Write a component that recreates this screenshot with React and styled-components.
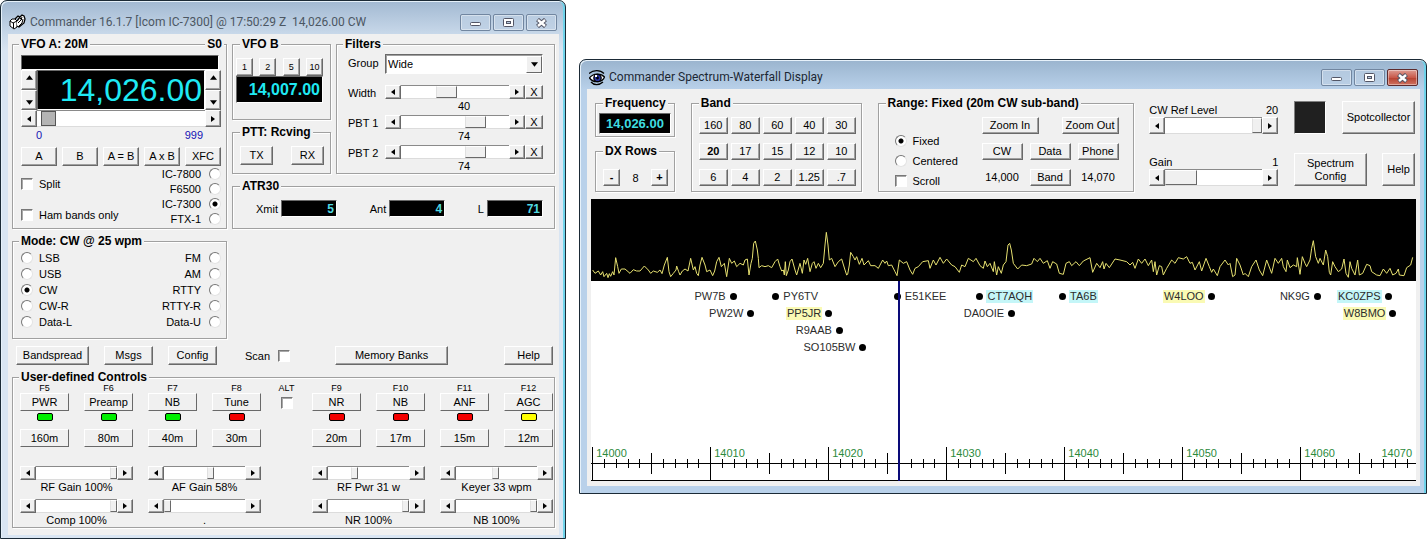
import React from 'react';
import styled, { createGlobalStyle } from 'styled-components';

const GlobalStyle = createGlobalStyle`
  * {
    box-sizing: border-box;
  }

  body {
    margin: 0;
    background: #fff;
    color: #000;
    font-family: "Liberation Sans", Arial, sans-serif;
    font-size: 11px;
    line-height: 14px;
  }

  button, input, select {
    font-family: inherit;
    font-size: inherit;
    color: inherit;
  }
`;

const Desktop = styled.main`
  display: grid;
  grid-template-columns: minmax(566px, 2fr) 3fr;
  column-gap: 13px;
  align-items: start;
`;

/* ---------- window frame ---------- */

const WindowFrame = styled.section`
  min-width: 0;
  margin-top: ${(props) => props.$top || 0}px;
  padding: 0 6px ${(props) => (props.$active ? 7 : 3)}px 7px;
  border: 1px solid #1b2a36;
  border-radius: 7px 7px 0 0;
  background: ${(props) =>
    props.$active
      ? 'linear-gradient(#9ab4ce, #b9d1ea 30px)'
      : 'linear-gradient(#a2b9d2, #c9d9ea 34px, #d9e5f2 50px)'};
  box-shadow: inset 1px 1px #e6f1fa, inset -2px 0 #6fd3ea;
`;

const TitleBar = styled.header`
  display: flex;
  align-items: center;
  gap: 4px;
  height: ${(props) => (props.$active ? 29 : 33)}px;
  padding: ${(props) => (props.$active ? '6px 2px 0 2px' : '10px 2px 0 1px')};
`;

const Title = styled.h1`
  flex: 1;
  margin: 0;
  overflow: hidden;
  color: ${(props) => (props.$active ? '#1c2733' : '#4c5763')};
  font-family: Roboto, "Open Sans", sans-serif;
  font-size: 12px;
  font-weight: 400;
  line-height: 17px;
  white-space: pre;
`;

const CaptionButtons = styled.div`
  display: flex;
  gap: 2px;
`;

const CaptionButton = styled.button`
  display: grid;
  place-items: center;
  width: 31px;
  height: 17px;
  padding: 0;
  border: 1px solid ${(props) => (props.$danger ? '#5d2a2c' : '#7186a0')};
  border-radius: 2px;
  background: ${(props) =>
    props.$danger ? 'linear-gradient(#dd9c92, #c8594a 50%, #b5402f 51%, #cf7260)' : 'rgba(190, 208, 228, 0.6)'};
  box-shadow: inset 0 0 0 1px rgba(255, 255, 255, 0.4);
`;

const Client = styled.div`
  padding: ${(props) => props.$pad};
  background: #f0f0f0;
`;

/* ---------- common controls ---------- */

const Group = styled.fieldset`
  position: relative;
  min-width: 0;
  margin: 0;
  padding: ${(props) => props.$pad || '0'};
  border: 1px solid #a0a0a0;
  box-shadow: 1px 1px #fff, inset 1px 1px #fff;
`;

const Legend = styled.legend`
  margin-left: ${(props) => props.$indent || 0}px;
  padding: 0 2px;
  background: #f0f0f0;
  font-size: 12px;
  font-weight: 700;
  line-height: 14px;
  white-space: nowrap;
`;

const Signal = styled.output`
  position: absolute;
  top: -14px;
  right: 2px;
  padding: 0 2px;
  background: #f0f0f0;
  font-size: 12px;
  font-weight: 700;
`;

const Button = styled.button`
  width: ${(props) => (props.$w ? `${props.$w}px` : 'auto')};
  height: ${(props) => props.$h || 19}px;
  padding: 0;
  border: 1px solid;
  border-color: #fff #696969 #696969 #fff;
  background: #f0f0f0;
  box-shadow: ${(props) => (props.$flat ? 'none' : 'inset -1px -1px #a0a0a0')};
  font-size: ${(props) => (props.$small ? 9 : 11)}px;
  font-weight: ${(props) => (props.$bold ? 700 : 400)};
  line-height: 13px;
  white-space: ${(props) => (props.$wrap ? 'normal' : 'nowrap')};
`;

const Readout = styled.output`
  display: flex;
  align-items: center;
  justify-content: ${(props) => (props.$center ? 'center' : 'flex-end')};
  height: ${(props) => props.$h}px;
  padding: 0 2px;
  border: 1px solid;
  border-color: #696969 #fff #fff #696969;
  background: #000;
  color: ${(props) => props.$color || '#1fe9f3'};
  font-size: ${(props) => props.$size}px;
  font-weight: ${(props) => (props.$light ? 400 : 700)};
`;

const Choice = styled.label`
  display: flex;
  flex-direction: ${(props) => (props.$reverse ? 'row-reverse' : 'row')};
  align-items: center;
  gap: ${(props) => props.$gap || 6}px;
  height: ${(props) => props.$h || 16}px;
  white-space: nowrap;
`;

const Radio = styled.input.attrs({ type: 'radio' })`
  appearance: none;
  width: 12px;
  height: 12px;
  margin: 0;
  border: 1px solid;
  border-color: #777 #e3e3e3 #e3e3e3 #777;
  border-radius: 50%;
  background: #fff;

  &:checked {
    background: radial-gradient(circle, #000 2px, #fff 3px);
  }
`;

const Check = styled.input.attrs({ type: 'checkbox' })`
  appearance: none;
  width: 12px;
  height: 12px;
  margin: 0;
  border: 1px solid;
  border-color: #777 #fff #fff #777;
  background: #fff;
  box-shadow: inset 1px 1px #a8a8a8;
`;

const ScrollBox = styled.div`
  display: flex;
  height: ${(props) => props.$h}px;
`;

const ScrollButton = styled(Button)`
  display: grid;
  place-items: center;
  flex: none;
  width: 16px;
  height: 100%;
`;

const ScrollTrack = styled.input.attrs({ type: 'range' })`
  appearance: none;
  flex: 1;
  width: 0;
  min-width: 0;
  height: 100%;
  margin: 0;
  border-top: 1px solid #8a8a8a;
  border-bottom: 1px solid #dcdcdc;
  background: #fff;

  &::-webkit-slider-thumb {
    appearance: none;
    width: ${(props) => props.$thumb}px;
    height: ${(props) => props.$h - 2}px;
    border: 1px solid;
    border-color: ${(props) => (props.$dark ? '#555' : '#fff #696969 #696969 #e0e0e0')};
    background: ${(props) => (props.$dark ? '#b4b4b4' : '#f0f0f0')};
  }
`;

const SHAPES = {
  left: '5,0 5,6 1,3',
  right: '1,0 1,6 5,3',
  up: '0,5 6,5 3,1',
  down: '0,1 6,1 3,5',
};

const Arrow = ({ dir, size = 6 }) => (
    <svg width={size} height={size} viewBox="0 0 6 6">
        <polygon points={SHAPES[dir]} fill="#000" />
    </svg>
);

const ScrollBar = ({ label, value, max = 100, thumb = 7, h = 14, dark, children }) => (
    <ScrollBox $h={h}>
        <ScrollButton type="button" aria-label={`${label} down`}><Arrow dir="left" /></ScrollButton>
        <ScrollTrack aria-label={label} min="0" max={max} defaultValue={value} $thumb={thumb} $h={h} $dark={dark} />
        <ScrollButton type="button" aria-label={`${label} up`}><Arrow dir="right" /></ScrollButton>
        {children}
    </ScrollBox>
);

const Captions = ({ active }) => (
    <CaptionButtons>
        <CaptionButton type="button" aria-label="Minimize">
            <svg width="13" height="9" viewBox="0 0 13 9">
                <rect x="1.5" y="4.5" width="10" height="3" rx="1" fill="#fff" stroke="#535666" />
            </svg>
        </CaptionButton>
        <CaptionButton type="button" aria-label="Maximize">
            <svg width="12" height="9" viewBox="0 0 12 9">
                <rect x="0.5" y="0.5" width="10" height="8" rx="1" fill="#fff" stroke="#535666" />
                <rect x="3.5" y="3.5" width="4" height="2" fill="#b9cbe0" stroke="#535666" />
            </svg>
        </CaptionButton>
        <CaptionButton type="button" aria-label="Close" $danger={active}>
            <svg width="13" height="10" viewBox="0 0 13 10">
                <path d="M2.5 1.5 L10.5 8.5 M10.5 1.5 L2.5 8.5" stroke="#535666" strokeWidth="4.4" />
                <path d="M3 2 L10 8 M10 2 L3 8" stroke="#fff" strokeWidth="2.4" />
            </svg>
        </CaptionButton>
    </CaptionButtons>
);

const RadioLogo = () => (
    <svg width="17" height="17" viewBox="0 0 17 17" fill="none">
        <path d="M1 7 L3 5 L6 5 L8 7 V13 L5 15 L1 12 Z" fill="#fff" stroke="#000" />
        <path d="M1 7 L4 9 L8 7 M4.5 9 V14" stroke="#000" />
        <path d="M6 5 L9 2 L11 3 M8 7 L11 3 L13 1 L15 2 L16 5 L15 9 L10 13 L8 12" fill="#fff" stroke="#000" strokeWidth="1.3" />
        <path d="M9 9 L12 6 L13 3 M10 12 L13 9 L14 5 M11 4 L13 6" stroke="#000" />
    </svg>
);

const EyeLogo = () => (
    <svg width="16" height="16" viewBox="0 0 16 16" fill="none">
        <path d="M0 3.5 C4 0 11 -0.5 15 3.5" stroke="#000" strokeWidth="1.2" />
        <path d="M0.5 8 C4 3 12 3 15.5 7 C14 12 5 14 0.5 8 Z" fill="#fff" stroke="#000" strokeWidth="1.3" />
        <circle cx="8.5" cy="8" r="3.7" fill="#2a35a0" stroke="#000" strokeWidth="1.2" />
        <circle cx="8.5" cy="8" r="1.4" fill="#000" />
        <rect x="6" y="5" width="2" height="2" fill="#fff" />
        <path d="M2 12 C5 15.5 10 15.5 14 12" stroke="#000" strokeWidth="1.3" />
    </svg>
);

/* ---------- transceiver window ---------- */

const Panels = styled.div`
  display: grid;
  grid-template-columns: 215px 1fr;
  gap: 5px;
  align-items: start;
`;

const RightPanels = styled.div`
  display: grid;
  grid-template-columns: 99px 1fr;
  gap: 5px;
`;

const Stack = styled.div`
  display: flex;
  flex-direction: column;
  gap: ${(props) => props.$gap || 0}px;
`;

const WideGroup = styled(Group)`
  grid-column: 1 / -1;
`;

const Meter = styled.div`
  height: 15px;
  margin-right: 2px;
  border: 1px solid;
  border-color: #696969 #fff #fff #696969;
  background: #000;
`;

const TuneRow = styled.div`
  display: grid;
  grid-template-columns: 16px 1fr 16px;
  height: 40px;
`;

const Spinner = styled.div`
  display: grid;
  grid-template-rows: 1fr 1fr;
`;

const SpinButton = styled(Button)`
  display: grid;
  justify-items: center;
  align-items: ${(props) => props.$align};
  width: 16px;
  height: 100%;
  padding: 3px 0;
`;

const Limits = styled.div`
  display: flex;
  justify-content: space-between;
  padding: 1px 18px 5px 15px;
  color: #1414b4;
`;

const ButtonRow = styled.div`
  display: flex;
  justify-content: space-between;
`;

const Rigs = styled.div`
  display: flex;
  justify-content: space-between;
  height: 60px;
`;

const RigChecks = styled(Stack)`
  justify-content: space-between;
  padding: 10px 0 3px;
`;

const ModeGrid = styled.div`
  display: flex;
  justify-content: space-between;
`;

const FilterGrid = styled.div`
  display: grid;
  grid-template-columns: 37px 1fr;
  row-gap: 2px;
`;

const FilterLabel = styled.label`
  line-height: ${(props) => props.$lh || 15}px;
`;

const SelectBox = styled.div`
  position: relative;
  height: 20px;
  margin-bottom: 9px;
  border: 1px solid;
  border-color: #696969 #fff #fff #696969;
  box-shadow: inset 1px 1px #a0a0a0;
  background: #fff;
`;

const Select = styled.select`
  appearance: none;
  width: 100%;
  height: 100%;
  padding: 0 2px;
  border: 0;
  background: transparent;
`;

const SelectArrow = styled.span`
  position: absolute;
  top: 1px;
  right: 0;
  display: grid;
  place-items: center;
  width: 16px;
  height: 17px;
  border: 1px solid;
  border-color: #fff #696969 #696969 #fff;
  background: #f0f0f0;
  pointer-events: none;
`;

const FilterControl = styled.div`
  height: 28px;
  text-align: center;
`;

const TunerRow = styled.div`
  display: flex;
  justify-content: space-between;
`;

const TunerField = styled.label`
  display: flex;
  align-items: center;
  gap: 3px;
`;

const TunerReadout = styled(Readout)`
  width: 56px;
`;

const Actions = styled.div`
  display: flex;
  gap: 15px;
  padding: 7px 2px 5px 4px;
`;

const ScanChoice = styled(Choice)`
  height: 19px;
  margin: 0 30px 0 13px;
`;

const HelpButton = styled(Button)`
  margin-left: auto;
`;

const UserGrid = styled.div`
  display: grid;
  grid-template-columns: repeat(4, 1fr) 21px repeat(4, 1fr);
  column-gap: 15px;
`;

const UserKey = styled.div`
  display: flex;
  flex-direction: column;
  align-items: stretch;
  font-size: 9px;
  line-height: 9px;
  text-align: center;
`;

const Led = styled.span`
  align-self: center;
  width: 16px;
  height: 8px;
  margin: 2px 0 8px;
  border: 1px solid #000;
  border-radius: 2px;
  background: ${(props) => props.$color};
`;

const AltChoice = styled.label`
  display: flex;
  flex-direction: column;
  align-items: center;
  gap: 4px;
  font-size: 9px;
  line-height: 9px;
`;

const UserSlider = styled.div`
  grid-column: ${(props) => props.$col} / span 2;
  margin-top: ${(props) => (props.$first ? 19 : 5)}px;
  text-align: center;
`;

const RIGS = ['IC-7800', 'F6500', 'IC-7300', 'FTX-1'];
const MODES_LEFT = ['LSB', 'USB', 'CW', 'CW-R', 'Data-L'];
const MODES_RIGHT = ['FM', 'AM', 'RTTY', 'RTTY-R', 'Data-U'];

const FILTERS = [
  { label: 'Width', value: 40 },
  { label: 'PBT 1', value: 74 },
  { label: 'PBT 2', value: 74 },
];

const GREEN = '#00f000';
const RED = '#f40000';

const KEYS = [
  { key: 'F5', name: 'PWR', led: GREEN, band: '160m' },
  { key: 'F6', name: 'Preamp', led: GREEN, band: '80m' },
  { key: 'F7', name: 'NB', led: GREEN, band: '40m' },
  { key: 'F8', name: 'Tune', led: RED, band: '30m' },
  { key: 'F9', name: 'NR', led: RED, band: '20m' },
  { key: 'F10', name: 'NB', led: RED, band: '17m' },
  { key: 'F11', name: 'ANF', led: RED, band: '15m' },
  { key: 'F12', name: 'AGC', led: '#ffff00', band: '12m' },
];

const SLIDERS = [
  { text: 'RF Gain 100%', value: 100, col: 1 },
  { text: 'AF Gain 58%', value: 58, col: 3 },
  { text: 'RF Pwr 31 w', value: 31, col: 6 },
  { text: 'Keyer 33 wpm', value: 49, col: 8 },
  { text: 'Comp 100%', value: 100, col: 1 },
  { text: '.', value: 0, col: 3 },
  { text: 'NR 100%', value: 100, col: 6 },
  { text: 'NB 100%', value: 100, col: 8 },
];

const SpinPair = () => (
    <Spinner>
        <SpinButton type="button" aria-label="Tune up" $align="start"><Arrow dir="up" size={7} /></SpinButton>
        <SpinButton type="button" aria-label="Tune down" $align="end"><Arrow dir="down" size={7} /></SpinButton>
    </Spinner>
);

const KeyColumn = ({ item }) => (
    <UserKey>
        {item.key}
        <Button type="button" $flat $h={18}>{item.name}</Button>
        <Led $color={item.led} />
        <Button type="button" $flat $h={18}>{item.band}</Button>
    </UserKey>
);

const VfoA = () => (
    <Group $pad="4px 5px 2px 8px">
        <Legend $indent={-2}>VFO A: 20M</Legend>
        <Signal>S0</Signal>
        <Meter />
        <TuneRow>
            <SpinPair />
            <Readout $h={40} $size={32} $light>14,026.00</Readout>
            <SpinPair />
        </TuneRow>
        <ScrollBar label="VFO A offset" value={26} max={999} thumb={15} h={17} dark />
        <Limits><span>0</span><span>999</span></Limits>
        <ButtonRow>
            {['A', 'B', 'A = B', 'A x B', 'XFC'].map((text) => (
                <Button type="button" $w={36} key={text}>{text}</Button>
            ))}
        </ButtonRow>
        <Rigs>
            <RigChecks>
                <Choice><Check />Split</Choice>
                <Choice><Check />Ham bands only</Choice>
            </RigChecks>
            <Stack>
                {RIGS.map((rig) => (
                    <Choice $reverse $h={15} $gap={8} key={rig}>
                        <Radio name="rig" defaultChecked={rig === 'IC-7300'} />{rig}
                    </Choice>
                ))}
            </Stack>
        </Rigs>
    </Group>
);

const Mode = () => (
    <Group $pad="2px 5px 8px 8px">
        <Legend $indent={-2}>Mode: CW @ 25 wpm</Legend>
        <ModeGrid>
            <Stack>
                {MODES_LEFT.map((mode) => (
                    <Choice key={mode}><Radio name="mode" defaultChecked={mode === 'CW'} />{mode}</Choice>
                ))}
            </Stack>
            <Stack>
                {MODES_RIGHT.map((mode) => (
                    <Choice $reverse $gap={8} key={mode}><Radio name="mode" />{mode}</Choice>
                ))}
            </Stack>
        </ModeGrid>
    </Group>
);

const Filters = () => (
    <Group $pad="3px 11px 0 11px">
        <Legend $indent={-5}>Filters</Legend>
        <FilterGrid>
            <FilterLabel htmlFor="filter-group" $lh={19}>Group</FilterLabel>
            <SelectBox>
                <Select id="filter-group" defaultValue="Wide">
                    <option>Wide</option>
                </Select>
                <SelectArrow><Arrow dir="down" size={7} /></SelectArrow>
            </SelectBox>
            {FILTERS.map((filter) => (
                <React.Fragment key={filter.label}>
                    <FilterLabel as="span" $lh={16}>{filter.label}</FilterLabel>
                    <FilterControl>
                        <ScrollBar label={filter.label} value={filter.value} thumb={21}>
                            <Button type="button" $w={18} $h={14}>X</Button>
                        </ScrollBar>
                        {filter.value}
                    </FilterControl>
                </React.Fragment>
            ))}
        </FilterGrid>
    </Group>
);

const Commander = () => (
    <WindowFrame>
        <TitleBar>
            <RadioLogo />
            <Title>{'Commander 16.1.7 [Icom IC-7300] @ 17:50:29 Z  14,026.00 CW'}</Title>
            <Captions />
        </TitleBar>
        <Client $pad="3px 4px 7px">
            <Panels>
                <Stack $gap={5}>
                    <VfoA />
                    <Mode />
                </Stack>
                <RightPanels>
                    <Stack $gap={5}>
                        <Group $pad="7px 7px 16px 3px">
                            <Legend $indent={4}>VFO B</Legend>
                            <ButtonRow>
                                {['1', '2', '5', '10'].map((step) => (
                                    <Button type="button" $w={17} $h={18} $small key={step}>{step}</Button>
                                ))}
                            </ButtonRow>
                            <Readout $h={27} $size={16}>14,007.00</Readout>
                        </Group>
                        <Group $pad="7px 6px 8px 7px">
                            <Legend>PTT: Rcving</Legend>
                            <ButtonRow>
                                <Button type="button" $w={33}>TX</Button>
                                <Button type="button" $w={33}>RX</Button>
                            </ButtonRow>
                        </Group>
                    </Stack>
                    <Filters />
                    <WideGroup $pad="7px 11px 11px 23px">
                        <Legend $indent={-16}>ATR30</Legend>
                        <TunerRow>
                            <TunerField>Xmit<TunerReadout $h={17} $size={12} $color="#4fd8e0">5</TunerReadout></TunerField>
                            <TunerField>Ant<TunerReadout $h={17} $size={12} $color="#4fd8e0">4</TunerReadout></TunerField>
                            <TunerField>L<TunerReadout $h={17} $size={12} $color="#4fd8e0">71</TunerReadout></TunerField>
                        </TunerRow>
                    </WideGroup>
                </RightPanels>
            </Panels>
            <Actions>
                <Button type="button" $w={73}>Bandspread</Button>
                <Button type="button" $w={49}>Msgs</Button>
                <Button type="button" $w={49}>Config</Button>
                <ScanChoice $reverse $gap={8}><Check />Scan</ScanChoice>
                <Button type="button" $w={113}>Memory Banks</Button>
                <HelpButton type="button" $w={49}>Help</HelpButton>
            </Actions>
            <Group $pad="0 1px 0 7px">
                <Legend $indent={-1}>User-defined Controls</Legend>
                <UserGrid>
                    {KEYS.slice(0, 4).map((item) => <KeyColumn item={item} key={item.key} />)}
                    <AltChoice>ALT<Check /></AltChoice>
                    {KEYS.slice(4).map((item) => <KeyColumn item={item} key={item.key} />)}
                    {SLIDERS.map((slider, i) => (
                        <UserSlider $col={slider.col} $first={i < 4} key={slider.text}>
                            <ScrollBar label={slider.text} value={slider.value} />
                            {slider.text}
                        </UserSlider>
                    ))}
                </UserGrid>
            </Group>
        </Client>
    </WindowFrame>
);

/* ---------- spectrum window ---------- */

const Controls = styled.div`
  display: flex;
  justify-content: space-between;
  padding: 0 1px 7px 4px;
`;

const FrequencyColumn = styled(Stack)`
  width: 80px;
`;

const RowsControl = styled.div`
  display: flex;
  align-items: center;
  justify-content: space-between;
`;

const BandGrid = styled.div`
  display: grid;
  grid-template-columns: repeat(5, 29px);
  gap: 9px 3px;
`;

const RangeBody = styled.div`
  display: flex;
  align-items: flex-start;
  justify-content: space-between;
  width: 224px;
`;

const RangeChoices = styled(Stack)`
  padding-top: 14px;
`;

const RangeGrid = styled.div`
  display: grid;
  grid-template-columns: repeat(3, 41px);
  gap: 9px 7px;
  text-align: center;
  line-height: 17px;
`;

const ZoomRow = styled.div`
  display: flex;
  justify-content: space-between;
  grid-column: 1 / -1;
`;

const Levels = styled.div`
  display: flex;
  flex-direction: column;
  justify-content: space-between;
  width: 129px;
  padding: 7px 0 6px;
`;

const LevelHead = styled.div`
  display: flex;
  justify-content: space-between;
`;

const Tools = styled.div`
  display: flex;
  flex-direction: column;
  justify-content: space-between;
  width: 121px;
  padding: 5px 0 6px;
`;

const Swatch = styled.div`
  width: 32px;
  height: 33px;
  border: 1px solid;
  border-color: #808080 #fff #fff #808080;
  background: #202020;
`;

const Trace = styled.svg`
  display: block;
  width: 100%;
  height: 82px;
  background: #000;
`;

const Spots = styled.div`
  position: relative;
  display: flex;
  flex-direction: column;
  justify-content: space-between;
  height: 200px;
  padding-top: 7px;
  overflow: hidden;
  background: #fff;
`;

const SpotRow = styled.div`
  position: relative;
  height: 17px;
`;

const Spot = styled.span`
  position: absolute;
  display: flex;
  flex-direction: ${(props) => (props.$before ? 'row-reverse' : 'row')};
  align-items: center;
  gap: 3px;
  height: 17px;
`;

const Dot = styled.i`
  width: 7px;
  height: 7px;
  border-radius: 50%;
  background: #000;
`;

const Call = styled.span`
  padding: 0 1px;
  background: ${(props) => props.$bg || 'transparent'};
  color: #2c2c2c;
  line-height: 13px;
`;

const Marker = styled.div`
  position: absolute;
  top: 0;
  bottom: 0;
  width: 2px;
  margin-left: -1px;
  background: #0a0a78;
`;

const Scale = styled.svg`
  display: block;
  width: 100%;
  height: 34px;
`;

const TUNED = 14026;
const START = 13999.9;
const SPAN = 69.9;
const percent = (khz) => ((khz - START) / SPAN) * 100;

const CYAN = '#c4f6f8';
const YELLOW = '#fafab4';

const SPOTS = [
  [
    { call: 'PW7B', khz: 14011.9, before: true },
    { call: 'PY6TV', khz: 14015.6 },
    { call: 'E51KEE', khz: 14025.9 },
    { call: 'CT7AQH', khz: 14032.9, bg: CYAN },
    { call: 'TA6B', khz: 14039.9, bg: CYAN },
    { call: 'W4LOO', khz: 14052.4, before: true, bg: YELLOW },
    { call: 'NK9G', khz: 14061.4, before: true },
    { call: 'KC0ZPS', khz: 14067.4, before: true, bg: CYAN },
  ],
  [
    { call: 'PW2W', khz: 14013.4, before: true },
    { call: 'PP5JR', khz: 14020, before: true, bg: YELLOW },
    { call: 'DA0OIE', khz: 14035.5, before: true },
    { call: 'W8BMO', khz: 14067.8, before: true, bg: YELLOW },
  ],
  [{ call: 'R9AAB', khz: 14020.9, before: true }],
  [{ call: 'SO105BW', khz: 14022.9, before: true }],
];

const BANDS = ['160', '80', '60', '40', '30', '20', '17', '15', '12', '10', '6', '4', '2', '1.25', '.7'];

const TRACE_LOW = `38,225 45,235 55,228 62,240 68,230 72,245 80,235 84,248 88,236 92,244 98,230 102,240 107,188
  113,215 117,235 124,222 135,222 150,235 160,224 170,228 180,228 193,213 205,225 212,235 220,228 232,232
  240,225 246,236 253,210 262,187 267,230 272,245 280,235 288,225 290,213 296,230 300,240 307,228 315,222
  324,228 332,190 340,225 345,215 350,235 355,242 360,210 366,187 375,210 380,230 390,225 398,242 404,228
  410,200 417,187 424,215 433,205 440,245 448,190 455,205 463,198 470,215 480,205 490,210 495,195 502,192
  507,240 513,205 517,190 521,145 526,138 532,165 535,190 537,218 545,212 555,215 565,212 575,218 585,200
  593,192 600,215 605,228 610,225 613,240 616,200 619,242 625,225 630,200 636,192 645,225 650,240 660,205
  667,235 672,195 677,208 683,190 690,230 697,205 702,200 708,220 715,205 722,218 730,205 735,150 739,112
  744,150 748,195 755,190 765,215 775,200 785,192 795,225 800,240 803,238 808,210 812,172 820,185 825,195
  830,185 838,208 846,190 852,210 865,197 872,212 885,212 895,220 908,195 915,205 920,198 925,212 935,210
  945,230 951,242 958,195 970,205 980,200 990,225 998,238 1005,220 1015,215 1028,200 1045,197 1050,220
  1060,195 1068,210 1080,187 1090,205 1100,192 1115,210 1125,215 1138,232 1145,210 1155,215 1165,190
  1180,200 1188,190 1200,212 1210,220 1215,198 1222,215 1230,205 1240,230 1243,200 1250,240 1255,215
  1264,235 1270,210 1278,200 1284,150 1289,145`;

const TRACE_HIGH = `29,145 34,165 40,205 53,222 65,210 80,212 95,207 102,190 112,200 120,190 130,205 142,197
  150,220 158,200 170,207 178,235 190,238 198,205 208,200 215,212 228,200 238,212 250,198 270,188 278,232
  290,205 300,218 308,200 312,222 318,205 328,218 345,192 360,195 380,200 390,210 398,202 405,220 415,192
  425,205 435,192 445,212 455,195 460,230 465,200 470,240 478,212 485,215 490,240 500,220 515,195 525,205
  535,188 550,192 560,185 570,205 577,202 585,225 598,200 605,228 618,190 628,215 635,232 640,222 652,242
  660,215 675,195 685,210 690,205 698,245 705,240 710,190 720,210 730,240 735,235 745,245 755,215 768,195
  778,225 788,242 800,195 815,235 825,190 835,205 845,190 850,215 858,230 862,195 870,218 880,210 890,215
  892,188 900,238 907,185 915,205 920,215 930,195 935,160 940,137 947,185 955,205 960,190 970,210 977,165
  983,185 988,232 992,240 998,200 1005,215 1015,230 1025,222 1032,192 1038,235 1045,247 1050,200 1055,220
  1065,240 1073,195 1078,240 1088,235 1100,208 1110,212 1115,230 1130,240 1140,242 1150,222 1160,235
  1170,220 1178,240 1188,235 1195,222 1198,240 1212,242 1220,218 1232,210 1238,187`;

const TraceLine = (props) => (
    <polyline fill="none" stroke="#e6e070" strokeWidth="1" vectorEffect="non-scaling-stroke" {...props} />
);

const tickSpan = (n) => {
  if (n % 10 === 0) return [0, 34];
  if (n % 5 === 0) return [6, 27];
  return [12, 21];
};

const FrequencyScale = () => (
    <Scale shapeRendering="crispEdges">
        <rect x="0" y="16" width="100%" height="1" />
        <rect x="0" y="33" width="100%" height="1" />
        {Array.from({ length: 70 }, (_, n) => {
          const [top, bottom] = tickSpan(n);
          return <rect key={n} x={`${percent(14000 + n)}%`} y={top} width="1" height={bottom - top} />;
        })}
        {Array.from({ length: 7 }, (_, n) => (
            <text key={n} x={`${percent(14000 + n * 10)}%`} dx="4" y="10" fontSize="11" fill="#2b8a3c">
                {14000 + n * 10}
            </text>
        ))}
        <text x="100%" dx="-4" y="10" fontSize="11" textAnchor="end" fill="#2b8a3c">14070</text>
    </Scale>
);

const spotPlace = (spot) => (
  spot.before
    ? { right: `calc(${100 - percent(spot.khz)}% - 4px)` }
    : { left: `calc(${percent(spot.khz)}% - 4px)` }
);

const Spectrum = () => (
    <WindowFrame $active $top={59}>
        <TitleBar $active>
            <EyeLogo />
            <Title $active>Commander Spectrum-Waterfall Display</Title>
            <Captions active />
        </TitleBar>
        <Client $pad="7px 4px 5px">
            <Controls>
                <FrequencyColumn $gap={7}>
                    <Group $pad="3px 3px 2px">
                        <Legend $indent={4}>Frequency</Legend>
                        <Readout $h={21} $size={13} $center $color="#3fdde0">14,026.00</Readout>
                    </Group>
                    <Group $pad="11px 6px 5px 7px">
                        <Legend>DX Rows</Legend>
                        <RowsControl>
                            <Button type="button" $w={17} $h={17} $bold>-</Button>
                            <span>8</span>
                            <Button type="button" $w={17} $h={17} $bold>+</Button>
                        </RowsControl>
                    </Group>
                </FrequencyColumn>
                <Group $pad="7px 5px 5px 7px">
                    <Legend>Band</Legend>
                    <BandGrid>
                        {BANDS.map((band) => (
                            <Button type="button" $h={17} $bold={band === '20'} key={band}>{band}</Button>
                        ))}
                    </BandGrid>
                </Group>
                <Group $pad="7px 14px 0 16px">
                    <Legend $indent={-9}>Range: Fixed (20m CW sub-band)</Legend>
                    <RangeBody>
                        <RangeChoices>
                            <Choice $h={20}><Radio name="range" defaultChecked />Fixed</Choice>
                            <Choice $h={20}><Radio name="range" />Centered</Choice>
                            <Choice $h={20}><Check />Scroll</Choice>
                        </RangeChoices>
                        <RangeGrid>
                            <ZoomRow>
                                <Button type="button" $w={57} $h={17}>Zoom In</Button>
                                <Button type="button" $w={57} $h={17}>Zoom Out</Button>
                            </ZoomRow>
                            <Button type="button" $h={17}>CW</Button>
                            <Button type="button" $h={17}>Data</Button>
                            <Button type="button" $h={17}>Phone</Button>
                            <span>14,000</span>
                            <Button type="button" $h={17}>Band</Button>
                            <span>14,070</span>
                        </RangeGrid>
                    </RangeBody>
                </Group>
                <Levels>
                    <div>
                        <LevelHead><span>CW Ref Level</span><span>20</span></LevelHead>
                        <ScrollBar label="CW Ref Level" value={20} max={20} thumb={10} h={17} />
                    </div>
                    <div>
                        <LevelHead><span>Gain</span><span>1</span></LevelHead>
                        <ScrollBar label="Gain" value={0} thumb={32} h={17} />
                    </div>
                </Levels>
                <Tools>
                    <ButtonRow>
                        <Swatch />
                        <Button type="button" $w={73} $h={33}>Spotcollector</Button>
                    </ButtonRow>
                    <ButtonRow>
                        <Button type="button" $w={73} $h={33} $wrap>Spectrum Config</Button>
                        <Button type="button" $w={33} $h={33}>Help</Button>
                    </ButtonRow>
                </Tools>
            </Controls>
            <Trace viewBox="33 12 2475 246" preserveAspectRatio="none">
                <TraceLine points={TRACE_LOW} />
                <TraceLine points={TRACE_HIGH} transform="translate(1260 0)" />
            </Trace>
            <Spots>
                <div>
                    {SPOTS.map((row, i) => (
                        <SpotRow key={i}>
                            {row.map((spot) => (
                                <Spot key={spot.call} $before={spot.before} style={spotPlace(spot)}>
                                    <Dot />
                                    <Call $bg={spot.bg}>{spot.call}</Call>
                                </Spot>
                            ))}
                        </SpotRow>
                    ))}
                </div>
                <FrequencyScale />
                <Marker style={{ left: `${percent(TUNED)}%` }} />
            </Spots>
        </Client>
    </WindowFrame>
);

const App = () => {
    return (
        <>
            <GlobalStyle />
            <Desktop>
                <Commander />
                <Spectrum />
            </Desktop>
        </>
    );
};

export default App;
